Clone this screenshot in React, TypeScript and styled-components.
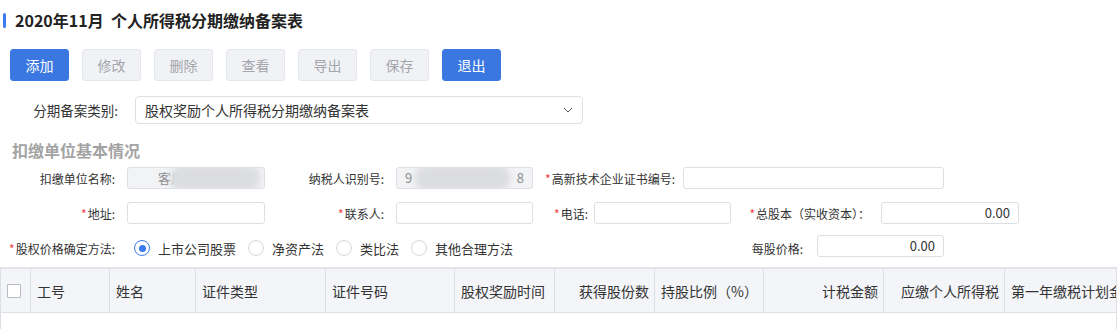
import React from "react";
import styled, { createGlobalStyle } from "styled-components";

const GlobalStyle = createGlobalStyle`
  html, body { margin: 0; padding: 0; background: #ffffff; }
  body { font-family: "Noto Sans CJK SC", "Noto Sans", "Liberation Sans", sans-serif; color: #333; }
  * { box-sizing: border-box; }
`;

const Page = styled.div`
  width: 1119px;
  height: 329px;
  overflow: hidden;
  display: flex;
  flex-direction: column;
`;

const TitleBar = styled.div`
  height: 40px;
  display: flex;
  align-items: center;
  gap: 9px;
  padding-left: 3px;
`;

const Accent = styled.span`
  width: 3px;
  height: 15px;
  border-radius: 2px;
  background: #3c7bf0;
`;

const Title = styled.h1`
  margin: 0;
  font-size: 16px;
  font-weight: 700;
  color: #222;
  white-space: pre;
`;

const Toolbar = styled.div`
  margin-top: 9px;
  padding-left: 10px;
  display: flex;
  gap: 13px;
`;

const Button = styled.button<{ $primary?: boolean }>`
  width: 59px;
  height: 32px;
  border-radius: 3px;
  font-family: inherit;
  font-size: 14px;
  padding: 0;
  border: 1px solid ${(p) => (p.$primary ? "#3a77e0" : "#e4e7ed")};
  background: ${(p) => (p.$primary ? "#3a77e0" : "#f1f2f5")};
  color: ${(p) => (p.$primary ? "#ffffff" : "#a3a6ad")};
`;

const SelectRow = styled.div`
  margin-top: 15px;
  display: flex;
  align-items: center;
  height: 28px;
`;

const SelectLabel = styled.span`
  width: 122px;
  text-align: right;
  font-size: 13.5px;
  color: #333;
  padding-right: 4px;
`;

const SelectBox = styled.div`
  margin-left: 13px;
  width: 448px;
  height: 28px;
  border: 1px solid #dcdfe6;
  border-radius: 4px;
  display: flex;
  align-items: center;
  justify-content: space-between;
  padding: 0 8px 0 9px;
  font-size: 14px;
  color: #333;
`;

const SectionTitle = styled.h2`
  margin: 15px 0 0 12px;
  height: 22px;
  line-height: 22px;
  font-size: 16px;
  font-weight: 700;
  color: #a3a3a3;
`;

const Form = styled.div`
  margin-top: 6px;
  display: flex;
  flex-direction: column;
  gap: 13px;
`;

const Row = styled.div`
  height: 22px;
  display: flex;
  align-items: center;
`;

const Label = styled.label<{ $w: number; $gap?: number }>`
  width: ${(p) => p.$w}px;
  margin-right: ${(p) => p.$gap ?? 12}px;
  text-align: right;
  font-size: 12px;
  color: #333;
  white-space: nowrap;
`;

const Star = styled.span`
  color: #f23c3c;
  font-size: 12px;
  margin-right: 1px;
`;

const Input = styled.div<{ $w: number; $disabled?: boolean; $align?: string; $up?: number }>`
  position: relative;
  width: ${(p) => p.$w}px;
  height: 22px;
  margin-top: ${(p) => -(p.$up ?? 0)}px;
  border: 1px solid #dcdfe6;
  border-radius: 3px;
  background: ${(p) => (p.$disabled ? "#f2f3f5" : "#ffffff")};
  font-size: 13px;
  line-height: 20px;
  padding: 0 8px;
  text-align: ${(p) => p.$align ?? "left"};
  color: ${(p) => (p.$disabled ? "#8a8d93" : "#333")};
  overflow: hidden;
  white-space: nowrap;
`;

const Blur = styled.span<{ $left: number; $w: number }>`
  position: absolute;
  top: -3px;
  left: ${(p) => p.$left}px;
  width: ${(p) => p.$w}px;
  height: 26px;
  background: #dcdde0;
  border-radius: 12px;
  filter: blur(3px);
`;

const RadioGroup = styled.div`
  margin-left: 7px;
  width: 611px;
  display: flex;
  align-items: center;
  gap: 12px;
  font-size: 13px;
  color: #333;
`;

const RadioItem = styled.span`
  display: flex;
  align-items: center;
  gap: 8px;
`;

const Circle = styled.span<{ $on?: boolean }>`
  width: 16px;
  height: 16px;
  border-radius: 50%;
  border: 1px solid ${(p) => (p.$on ? "#3c7bf0" : "#d6d8dc")};
  display: flex;
  align-items: center;
  justify-content: center;
  &::after {
    content: "";
    width: 7px;
    height: 7px;
    border-radius: 50%;
    background: ${(p) => (p.$on ? "#3c7bf0" : "transparent")};
  }
`;

const Table = styled.div`
  margin-top: 8px;
  width: 1117px;
  border-top: 2px solid #e2e3e6;
  border-left: 1px solid #dcdfe6;
  border-right: 1px solid #dcdfe6;
  flex: 1;
  overflow: hidden;
`;

const HeaderRow = styled.div`
  display: flex;
  height: 44px;
  background: #f4f5f9;
  border-bottom: 1px solid #dcdfe6;
`;

const HeadCell = styled.div<{ $w: number; $right?: boolean }>`
  flex: 0 0 ${(p) => p.$w}px;
  border-right: 1px solid #dcdfe6;
  display: flex;
  align-items: center;
  justify-content: ${(p) => (p.$right ? "flex-end" : "flex-start")};
  padding: 0 5px 0 6px;
  font-size: 14px;
  color: #333;
  white-space: nowrap;
  overflow: hidden;
`;

const CheckBox = styled.span`
  width: 14px;
  height: 14px;
  border: 1px solid #b8bbc2;
  background: #fff;
  border-radius: 1px;
`;

const Chevron = () => (
  <svg width="12" height="12" viewBox="0 0 12 12" fill="none">
    <path d="M2 4l4 4 4-4" stroke="#555" strokeWidth="1" />
  </svg>
);

const columns: { t: string; w: number; right?: boolean }[] = [
  { t: "工号", w: 79 },
  { t: "姓名", w: 86 },
  { t: "证件类型", w: 130 },
  { t: "证件号码", w: 129 },
  { t: "股权奖励时间", w: 100 },
  { t: "获得股份数", w: 100, right: true },
  { t: "持股比例（%）", w: 109 },
  { t: "计税金额", w: 120, right: true },
  { t: "应缴个人所得税", w: 121, right: true },
  { t: "第一年缴税计划金额", w: 140 },
];

export default function App() {
  return (
    <>
      <GlobalStyle />
      <Page>
        <TitleBar>
          <Accent />
          <Title>{"2020年11月  个人所得税分期缴纳备案表"}</Title>
        </TitleBar>
        <Toolbar>
          <Button $primary>添加</Button>
          <Button>修改</Button>
          <Button>删除</Button>
          <Button>查看</Button>
          <Button>导出</Button>
          <Button>保存</Button>
          <Button $primary>退出</Button>
        </Toolbar>
        <SelectRow>
          <SelectLabel>分期备案类别:</SelectLabel>
          <SelectBox>
            <span>股权奖励个人所得税分期缴纳备案表</span>
            <Chevron />
          </SelectBox>
        </SelectRow>
        <SectionTitle>扣缴单位基本情况</SectionTitle>
        <Form>
          <Row>
            <Label $w={115}>扣缴单位名称:</Label>
            <Input $w={138} $disabled>
              <span style={{ marginLeft: 22 }}>客户</span>
              <Blur $left={42} $w={90} />
            </Input>
            <Label $w={119}>纳税人识别号:</Label>
            <Input $w={137} $disabled>
              <span>9</span>
              <Blur $left={18} $w={95} />
              <span style={{ position: "absolute", right: 8 }}>8</span>
            </Input>
            <Label $w={142} $gap={8}>
              <Star>*</Star>高新技术企业证书编号:
            </Label>
            <Input $w={261} />
          </Row>
          <Row>
            <Label $w={115}>
              <Star>*</Star>地址:
            </Label>
            <Input $w={138} />
            <Label $w={119}>
              <Star>*</Star>联系人:
            </Label>
            <Input $w={137} />
            <Label $w={55} $gap={6}>
              <Star>*</Star>电话:
            </Label>
            <Input $w={137} />
            <Label $w={139} $gap={11}>
              <Star>*</Star>总股本（实收资本）：
            </Label>
            <Input $w={138} $align="right">0.00</Input>
          </Row>
          <Row>
            <Label $w={115} $gap={12}>
              <Star>*</Star>股权价格确定方法:
            </Label>
            <RadioGroup>
              <RadioItem>
                <Circle $on />
                上市公司股票
              </RadioItem>
              <RadioItem>
                <Circle />
                净资产法
              </RadioItem>
              <RadioItem>
                <Circle />
                类比法
              </RadioItem>
              <RadioItem>
                <Circle />
                其他合理方法
              </RadioItem>
            </RadioGroup>
            <Label $w={58} $gap={14}>每股价格:</Label>
            <Input $w={127} $align="right" $up={4}>0.00</Input>
          </Row>
        </Form>
        <Table>
          <HeaderRow>
            <HeadCell $w={30}>
              <CheckBox />
            </HeadCell>
            {columns.map((c) => (
              <HeadCell key={c.t} $w={c.w} $right={c.right}>
                {c.t}
              </HeadCell>
            ))}
          </HeaderRow>
        </Table>
      </Page>
    </>
  );
}
